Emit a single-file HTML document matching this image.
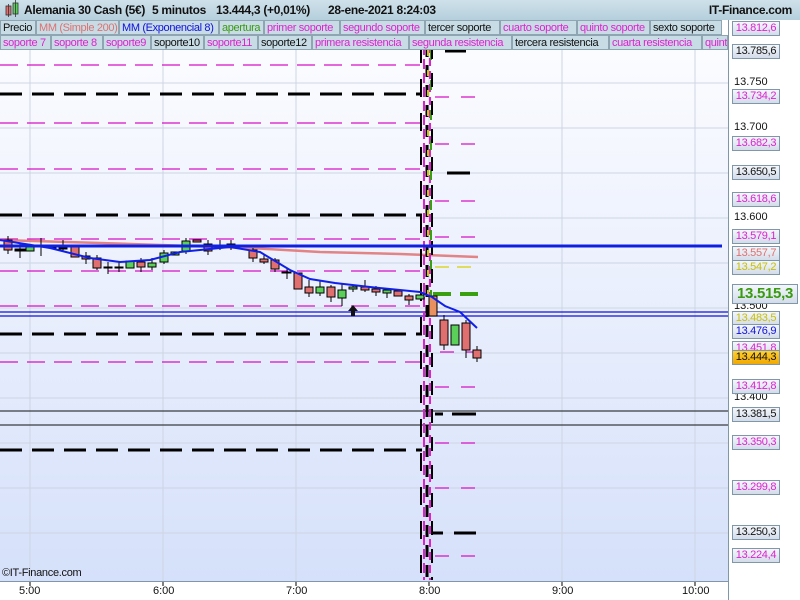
<!DOCTYPE html>
<html><head><meta charset="utf-8"><style>
*{margin:0;padding:0;box-sizing:border-box}
body{width:800px;height:600px;overflow:hidden;background:#fff;font-family:"Liberation Sans",sans-serif;position:relative}
#hdr{position:absolute;left:0;top:0;width:800px;height:20px;background:linear-gradient(#cfe1ea,#b5cfdc);font-weight:bold;font-size:12px;letter-spacing:-0.3px;color:#111}
#hdr span{position:absolute;top:3px;white-space:nowrap}
.lg{position:absolute;height:15px;font-size:11px;letter-spacing:-0.35px;line-height:14px;background:#c7dce5;border:1px solid #8fa6b2;padding-left:2px;white-space:nowrap;overflow:hidden}
.m{color:#e020d0}.k{color:#111}
.lb{position:absolute;left:732px;width:48px;height:15px;font-size:11px;letter-spacing:-0.3px;line-height:13px;text-align:center;background:linear-gradient(#f4f7fb,#d3dcea);border:1px solid #7f97a8;white-space:nowrap;overflow:hidden}
.pl{position:absolute;left:734px;font-size:11px;color:#111}
.tx{position:absolute;top:585px;font-size:11px;color:#111}
</style></head><body>
<svg width="800" height="600" style="position:absolute;left:0;top:0">
<defs><linearGradient id="bg" x1="0" y1="0" x2="0" y2="1"><stop offset="0" stop-color="#fbfcff"/><stop offset="1" stop-color="#d5e0fa"/></linearGradient></defs>
<rect x="0" y="50" width="728" height="532" fill="url(#bg)"/>
<g stroke="#cdd5e3" stroke-width="1">
<line x1="30" y1="50" x2="30" y2="582"/><line x1="163" y1="50" x2="163" y2="582"/><line x1="296" y1="50" x2="296" y2="582"/><line x1="429" y1="50" x2="429" y2="582"/><line x1="562" y1="50" x2="562" y2="582"/><line x1="695" y1="50" x2="695" y2="582"/>
<line x1="0" y1="83" x2="728" y2="83"/><line x1="0" y1="128" x2="728" y2="128"/><line x1="0" y1="218" x2="728" y2="218"/><line x1="0" y1="263" x2="728" y2="263"/><line x1="0" y1="308" x2="728" y2="308"/><line x1="0" y1="398" x2="728" y2="398"/><line x1="0" y1="173" x2="728" y2="173"/><line x1="0" y1="353" x2="728" y2="353"/><line x1="0" y1="443" x2="728" y2="443"/><line x1="0" y1="488" x2="728" y2="488"/><line x1="0" y1="533" x2="728" y2="533"/>
</g>
<g stroke="#d810c8" stroke-width="1.3" stroke-dasharray="18,9">
<line x1="0" y1="65" x2="420" y2="65"/><line x1="0" y1="123" x2="420" y2="123"/><line x1="0" y1="169" x2="420" y2="169"/><line x1="0" y1="239" x2="420" y2="239"/><line x1="0" y1="271" x2="420" y2="271"/><line x1="0" y1="306" x2="420" y2="306"/><line x1="0" y1="362" x2="420" y2="362"/>
</g>
<g stroke="#d810c8" stroke-width="1.3" stroke-dasharray="14,12">
<line x1="435" y1="97" x2="478" y2="97"/><line x1="435" y1="144" x2="478" y2="144"/><line x1="435" y1="201" x2="478" y2="201"/><line x1="435" y1="237" x2="478" y2="237"/><line x1="440" y1="352" x2="478" y2="352"/><line x1="435" y1="387" x2="478" y2="387"/><line x1="435" y1="488" x2="478" y2="488"/><line x1="435" y1="556" x2="478" y2="556"/><line x1="435" y1="443" x2="478" y2="443"/>
</g>
<g stroke="#000" stroke-width="3" stroke-dasharray="22,10">
<line x1="0" y1="94" x2="422" y2="94"/><line x1="0" y1="215" x2="422" y2="215"/><line x1="0" y1="334" x2="422" y2="334"/><line x1="0" y1="450" x2="422" y2="450"/>
</g>
<g stroke="#000" stroke-width="3">
<line x1="445" y1="51" x2="466" y2="51"/><line x1="447" y1="173" x2="470" y2="173"/><line x1="435" y1="414" x2="443" y2="414"/><line x1="452" y1="414" x2="476" y2="414"/><line x1="433" y1="533" x2="443" y2="533"/><line x1="454" y1="533" x2="476" y2="533"/>
</g>
<line x1="433" y1="294" x2="478" y2="294" stroke="#3aa010" stroke-width="4" stroke-dasharray="18,9"/>
<line x1="435" y1="267" x2="478" y2="267" stroke="#d8d000" stroke-width="1.3" stroke-dasharray="14,8"/>
<line x1="0" y1="411" x2="728" y2="411" stroke="#111"/><line x1="0" y1="425" x2="728" y2="425" stroke="#111"/>
<line x1="0" y1="312" x2="728" y2="312" stroke="#1010e0" stroke-width="1.3"/><line x1="0" y1="316" x2="728" y2="316" stroke="#1010e0" stroke-width="1.3"/>
<polyline points="0,240 100,243 250,248 320,252 400,254 478,257" fill="none" stroke="#e07070" stroke-width="2.5" opacity="0.85"/>
<g stroke-width="2">
<line x1="424" y1="45" x2="424" y2="580" stroke="#e020d0" stroke-dasharray="10,4"/>
<line x1="427" y1="45" x2="427" y2="580" stroke="#000" stroke-dasharray="12,8" stroke-width="3"/>
<line x1="430" y1="45" x2="430" y2="580" stroke="#e020d0" stroke-dasharray="8,5"/>
<line x1="428" y1="50" x2="428" y2="300" stroke="#c8c800" stroke-dasharray="6,14"/>
<line x1="431" y1="50" x2="431" y2="300" stroke="#3aa010" stroke-dasharray="10,20"/>
<line x1="432" y1="45" x2="432" y2="580" stroke="#000" stroke-dasharray="14,14"/>
<line x1="421" y1="45" x2="421" y2="580" stroke="#000" stroke-dasharray="18,16"/>
</g>
<g stroke="#000" stroke-width="1">
<line x1="8" y1="236" x2="8" y2="254"/><line x1="20" y1="244" x2="20" y2="258"/><line x1="41" y1="238" x2="41" y2="256"/><line x1="63" y1="240" x2="63" y2="252"/><line x1="86" y1="252" x2="86" y2="264"/><line x1="97" y1="255" x2="97" y2="270"/><line x1="108" y1="262" x2="108" y2="274"/><line x1="119" y1="262" x2="119" y2="272"/><line x1="141" y1="258" x2="141" y2="272"/><line x1="152" y1="258" x2="152" y2="270"/><line x1="164" y1="250" x2="164" y2="264"/><line x1="186" y1="238" x2="186" y2="254"/><line x1="208" y1="240" x2="208" y2="255"/><line x1="220" y1="240" x2="220" y2="250"/><line x1="231" y1="240" x2="231" y2="250"/><line x1="253" y1="248" x2="253" y2="262"/><line x1="264" y1="255" x2="264" y2="264"/><line x1="275" y1="258" x2="275" y2="272"/><line x1="287" y1="268" x2="287" y2="279"/><line x1="309" y1="280" x2="309" y2="297"/><line x1="320" y1="280" x2="320" y2="296"/><line x1="331" y1="285" x2="331" y2="302"/><line x1="342" y1="283" x2="342" y2="306"/><line x1="353" y1="285" x2="353" y2="292"/><line x1="365" y1="280" x2="365" y2="292"/><line x1="376" y1="286" x2="376" y2="296"/><line x1="387" y1="288" x2="387" y2="298"/><line x1="409" y1="294" x2="409" y2="305"/><line x1="444" y1="315" x2="444" y2="350"/><line x1="466" y1="320" x2="466" y2="358"/><line x1="477" y1="346" x2="477" y2="362"/>
</g>
<g stroke="#000" stroke-width="1">
<rect x="4" y="240" width="8" height="10" fill="#e07070"/><rect x="15" y="249" width="10" height="2" fill="#000"/><rect x="26" y="246" width="8" height="5" fill="#5ad05a"/><rect x="37" y="246" width="9" height="1" fill="#000"/><rect x="49" y="247" width="7" height="1" fill="#000"/><rect x="59" y="248" width="8" height="1" fill="#000"/><rect x="71" y="247" width="8" height="10" fill="#e07070"/><rect x="82" y="256" width="8" height="3" fill="#e07070"/><rect x="93" y="258" width="8" height="10" fill="#e07070"/><rect x="104" y="267" width="8" height="1" fill="#000"/><rect x="115" y="267" width="8" height="1" fill="#000"/><rect x="126" y="261" width="8" height="7" fill="#5ad05a"/><rect x="137" y="262" width="8" height="5" fill="#e07070"/><rect x="148" y="263" width="8" height="4" fill="#5ad05a"/><rect x="160" y="253" width="8" height="9" fill="#5ad05a"/><rect x="171" y="252" width="8" height="3" fill="#5ad05a"/><rect x="182" y="241" width="8" height="10" fill="#5ad05a"/><rect x="193" y="240" width="8" height="2" fill="#e07070"/><rect x="204" y="244" width="8" height="7" fill="#e07070"/><rect x="227" y="244" width="8" height="1" fill="#000"/><rect x="249" y="250" width="8" height="8" fill="#e07070"/><rect x="260" y="259" width="8" height="3" fill="#e07070"/><rect x="271" y="260" width="8" height="9" fill="#e07070"/><rect x="282" y="272" width="9" height="1" fill="#000"/><rect x="294" y="273" width="8" height="16" fill="#e07070"/><rect x="305" y="287" width="8" height="6" fill="#e07070"/><rect x="316" y="287" width="8" height="6" fill="#5ad05a"/><rect x="327" y="287" width="8" height="10" fill="#e07070"/><rect x="338" y="290" width="8" height="8" fill="#5ad05a"/><rect x="349" y="287" width="8" height="2" fill="#5ad05a"/><rect x="361" y="287" width="8" height="3" fill="#e07070"/><rect x="372" y="289" width="8" height="3" fill="#e07070"/><rect x="383" y="290" width="8" height="3" fill="#5ad05a"/><rect x="394" y="291" width="8" height="5" fill="#e07070"/><rect x="405" y="296" width="8" height="4" fill="#e07070"/><rect x="416" y="295" width="8" height="4" fill="#5ad05a"/>
<rect x="429" y="296" width="8" height="20" fill="#e89060"/><rect x="440" y="320" width="8" height="25" fill="#e07070"/><rect x="451" y="325" width="8" height="20" fill="#5ad05a"/><rect x="462" y="323" width="8" height="27" fill="#e07070"/><rect x="473" y="350" width="8" height="8" fill="#e07070"/>
</g>
<polyline points="0,240 50,248 90,258 120,262 150,260 180,252 230,247 260,252 290,270 310,279 335,283 370,287 400,290 420,292 432,297 445,306 460,312 477,328" fill="none" stroke="#1020e8" stroke-width="2"/>
<line x1="0" y1="246" x2="722" y2="246" stroke="#1020e0" stroke-width="3"/>
<path d="M353 305 l-5 6 h3 v5 h4 v-5 h3 z" fill="#111"/>
<rect x="0" y="582" width="800" height="18" fill="#fff"/>
<line x1="0" y1="581.5" x2="728" y2="581.5" stroke="#7f97a8"/>
<line x1="728.5" y1="20" x2="728.5" y2="600" stroke="#7f97a8"/>
<g stroke="#000"><line x1="30" y1="582" x2="30" y2="586"/><line x1="163" y1="582" x2="163" y2="586"/><line x1="296" y1="582" x2="296" y2="586"/><line x1="429" y1="582" x2="429" y2="586"/><line x1="562" y1="582" x2="562" y2="586"/><line x1="695" y1="582" x2="695" y2="586"/></g>
</svg>
<div id="hdr">
<svg width="20" height="20" style="position:absolute;left:0;top:0"><rect x="6" y="6" width="5" height="9" fill="#e07070" stroke="#333" stroke-width=".8"/><line x1="8.5" y1="4" x2="8.5" y2="17" stroke="#333" stroke-width=".8"/><rect x="13" y="3" width="5" height="11" fill="#5ad05a" stroke="#333" stroke-width=".8"/><line x1="15.5" y1="0" x2="15.5" y2="17" stroke="#333" stroke-width=".8"/></svg>
<span style="left:24px">Alemania 30 Cash (5€)</span><span style="left:152px">5 minutos</span><span style="left:216px">13.444,3 (+0,01%)</span><span style="left:328px">28-ene-2021 8:24:03</span><span style="right:8px">IT-Finance.com</span></div>
<div class="lg k" style="left:0;top:20px;width:36px">Precio</div>
<div class="lg" style="left:36px;top:20px;width:83px;color:#e07070">MM (Simple 200)</div>
<div class="lg" style="left:119px;top:20px;width:100px;color:#1010e0">MM (Exponencial 8)</div>
<div class="lg" style="left:219px;top:20px;width:45px;color:#3a9a10">apertura</div>
<div class="lg m" style="left:264px;top:20px;width:76px">primer soporte</div>
<div class="lg m" style="left:340px;top:20px;width:85px">segundo soporte</div>
<div class="lg k" style="left:425px;top:20px;width:75px">tercer soporte</div>
<div class="lg m" style="left:500px;top:20px;width:77px">cuarto soporte</div>
<div class="lg m" style="left:577px;top:20px;width:73px">quinto soporte</div>
<div class="lg k" style="left:650px;top:20px;width:72px">sexto soporte</div>
<div class="lg m" style="left:0;top:35px;width:51px">soporte 7</div>
<div class="lg m" style="left:51px;top:35px;width:52px">soporte 8</div>
<div class="lg m" style="left:103px;top:35px;width:48px">soporte9</div>
<div class="lg k" style="left:151px;top:35px;width:53px">soporte10</div>
<div class="lg m" style="left:204px;top:35px;width:54px">soporte11</div>
<div class="lg k" style="left:258px;top:35px;width:54px">soporte12</div>
<div class="lg m" style="left:312px;top:35px;width:97px">primera resistencia</div>
<div class="lg m" style="left:409px;top:35px;width:103px">segunda resistencia</div>
<div class="lg k" style="left:512px;top:35px;width:97px">tercera resistencia</div>
<div class="lg m" style="left:609px;top:35px;width:93px">cuarta resistencia</div>
<div class="lg m" style="left:702px;top:35px;width:26px">quinta resistencia</div>
<div class="pl" style="top:76px">13.750</div><div class="pl" style="top:121px">13.700</div><div class="pl" style="top:211px">13.600</div><div class="pl" style="top:300px">13.500</div><div class="pl" style="top:391px">13.400</div>
<div class="lb m" style="top:21px">13.812,6</div>
<div class="lb k" style="top:44px">13.785,6</div>
<div class="lb m" style="top:89px">13.734,2</div>
<div class="lb m" style="top:136px">13.682,3</div>
<div class="lb k" style="top:165px">13.650,5</div>
<div class="lb m" style="top:192px">13.618,6</div>
<div class="lb m" style="top:229px">13.579,1</div>
<div class="lb" style="top:246px;color:#e07070">13.557,7</div>
<div class="lb" style="top:260px;color:#c8c000">13.547,2</div>
<div class="lb" style="top:284px;width:66px;height:20px;font-size:15px;line-height:18px;font-weight:bold;color:#3a9a10">13.515,3</div>
<div class="lb" style="top:311px;color:#c8c000">13.483,5</div>
<div class="lb" style="top:324px;color:#1010e0">13.476,9</div>
<div class="lb m" style="top:341px">13.451,8</div>
<div class="lb k" style="top:350px;background:linear-gradient(#ffd030,#f0a800)">13.444,3</div>
<div class="lb m" style="top:379px">13.412,8</div>
<div class="lb k" style="top:407px">13.381,5</div>
<div class="lb m" style="top:435px">13.350,3</div>
<div class="lb m" style="top:480px">13.299,8</div>
<div class="lb k" style="top:525px">13.250,3</div>
<div class="lb m" style="top:548px">13.224,4</div>
<div style="position:absolute;left:2px;top:567px;font-size:11px;letter-spacing:-0.3px;color:#111">©IT-Finance.com</div>
<div class="tx" style="left:19px">5:00</div><div class="tx" style="left:153px">6:00</div><div class="tx" style="left:286px">7:00</div><div class="tx" style="left:419px">8:00</div><div class="tx" style="left:552px">9:00</div><div class="tx" style="left:682px">10:00</div>
</body></html>
